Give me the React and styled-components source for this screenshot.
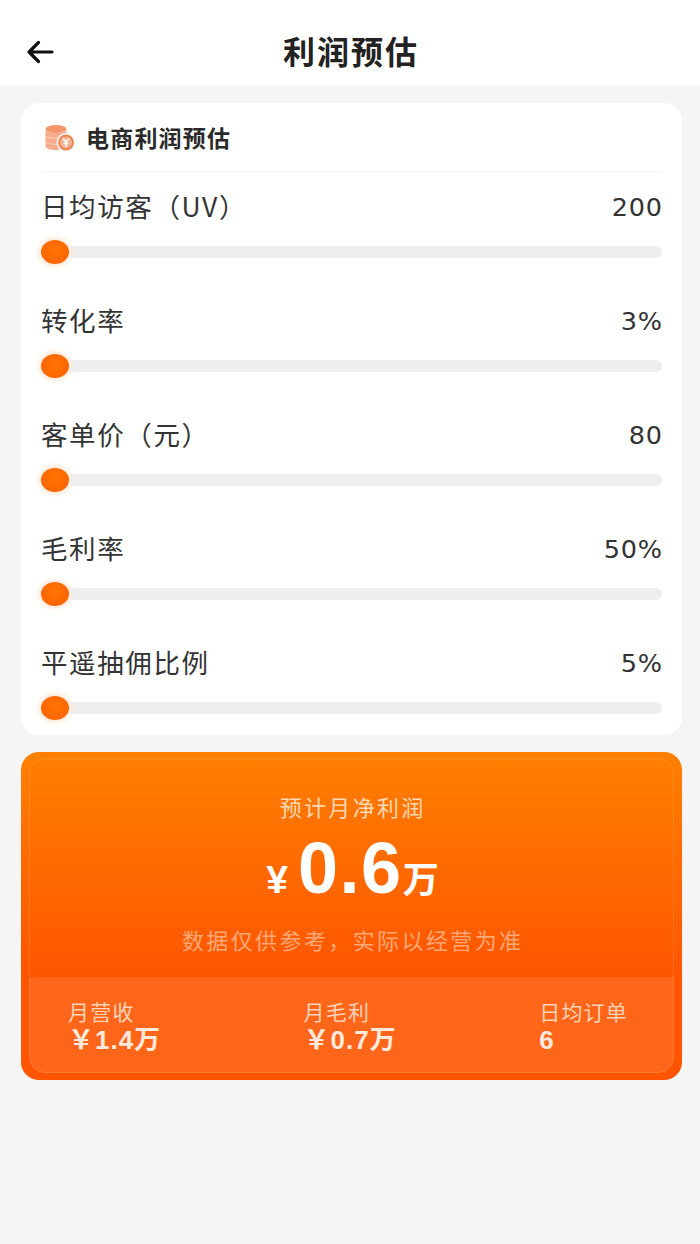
import styled, { createGlobalStyle } from "styled-components";

const cjk = `"Noto Sans CJK SC", "Noto Sans", sans-serif`;
const latin = `"DejaVu Sans", "Noto Sans CJK SC", sans-serif`;

const Global = createGlobalStyle`
  html, body { margin: 0; padding: 0; background: #f5f5f5; }
  * { box-sizing: border-box; }
`;

const Page = styled.div`
  width: 700px;
  height: 1244px;
  background: #f5f5f5;
  font-family: ${cjk};
  overflow: hidden;
`;

const Header = styled.header`
  height: 86px;
  background: #fff;
  display: flex;
  align-items: center;
  justify-content: center;
  position: relative;
  padding-top: 14px;
`;

const Back = styled.svg`
  position: absolute;
  left: 25px;
  top: 37px;
  width: 30px;
  height: 30px;
  fill: none;
  stroke: #111;
  stroke-width: 3.2;
  stroke-linecap: round;
  stroke-linejoin: round;
`;

const Title = styled.h1`
  margin: 0 0 0 2px;
  font-size: 32px;
  line-height: 36px;
  font-weight: 700;
  letter-spacing: 2px;
  color: #222;
`;

const Main = styled.main`
  padding: 17px 18px 0 21px;
  display: flex;
  flex-direction: column;
  gap: 17px;
`;

const Card = styled.section`
  height: 632px;
  background: #fff;
  border-radius: 18px;
  padding: 0 20px 0 21px;
`;

const CardHead = styled.div`
  height: 69px;
  padding: 0 0 0 2px;
  display: flex;
  align-items: center;
  gap: 10px;
  border-bottom: 1px solid #f6f6f6;
`;

const CoinSvg = styled.svg`
  width: 32px;
  height: 28px;
  margin-top: 2px;
`;

const CardTitle = styled.h2`
  margin: 0;
  font-size: 23px;
  line-height: 28px;
  font-weight: 700;
  letter-spacing: 1.2px;
  color: #2a2a2a;
`;

const Rows = styled.div`
  display: flex;
  flex-direction: column;
`;

const Row = styled.div`
  height: 114px;
  padding-top: 17px;
`;

const RowTop = styled.div`
  height: 36px;
  display: flex;
  align-items: center;
  justify-content: space-between;
  color: #333;
`;

const Label = styled.span`
  font-size: 26.5px;
  line-height: 36px;
  letter-spacing: 1.6px;
  margin-left: -1px;
  margin-top: -2px;
`;

const Value = styled.span`
  font-family: ${latin};
  font-size: 25.5px;
  letter-spacing: 0.8px;
  margin-right: -0.8px;
  margin-top: -1px;
`;

const Track = styled.div`
  position: relative;
  height: 12px;
  margin-top: 21px;
  background: #eeeeee;
  border-radius: 6px;
`;

const Thumb = styled.span`
  position: absolute;
  left: -1px;
  top: -6px;
  width: 28px;
  height: 24px;
  border-radius: 50%;
  background: radial-gradient(circle at 50% 40%, #ff7400, #fd5f00);
  box-shadow: 0 0 4px 3px #ffeadb;
`;

const Result = styled.section`
  position: relative;
  height: 328px;
  border-radius: 18px;
  padding: 6px 8px 7px;
  background: linear-gradient(180deg, #ff8000 0%, #ff5500 68%, #ff5500 100%);
  display: flex;
  flex-direction: column;
  color: #fff;
  &::after {
    content: "";
    position: absolute;
    inset: 6px 8px 7px;
    border: 1px solid rgba(255, 255, 255, 0.13);
    border-radius: 16px;
    pointer-events: none;
  }
`;

const ResultTop = styled.div`
  height: 219px;
  display: flex;
  flex-direction: column;
  align-items: center;
`;

const ResultLabel = styled.div`
  margin-top: 34px;
  font-size: 22px;
  line-height: 28px;
  letter-spacing: 2.3px;
  margin-right: -2.3px;
  color: #ffd9b5;
`;

const Amount = styled.div`
  margin: 12px 0 0 2px;
  height: 72px;
  display: flex;
  align-items: baseline;
  font-family: "Liberation Sans", ${cjk};
  font-weight: 700;
  line-height: 72px;
`;

const Yen = styled.span`
  font-size: 39px;
  margin-right: 10px;
`;

const Big = styled.span`
  font-size: 72px;
  letter-spacing: 1.5px;
`;

const Unit = styled.span`
  font-size: 36px;
  font-family: ${cjk};
`;

const Note = styled.div`
  margin-top: 21px;
  font-size: 22px;
  line-height: 28px;
  letter-spacing: 2.4px;
  margin-right: -2.4px;
  color: #ffa877;
`;

const Stats = styled.div`
  flex: 1;
  background: rgba(255, 255, 255, 0.1);
  border-radius: 0 0 16px 16px;
  padding: 21px 46px 0 39px;
  display: flex;
  justify-content: space-between;
`;

const Stat = styled.div``;

const StatLabel = styled.div`
  font-size: 21px;
  line-height: 26px;
  letter-spacing: 1.2px;
  color: #ffd3b8;
`;

const StatValue = styled.div`
  margin-top: 2px;
  font-family: "Liberation Sans", ${cjk};
  font-size: 26px;
  line-height: 28px;
  font-weight: 700;
  letter-spacing: 1px;
  color: #ffeadd;
`;

const fields = [
  { label: "日均访客（UV）", value: "200" },
  { label: "转化率", value: "3%" },
  { label: "客单价（元）", value: "80" },
  { label: "毛利率", value: "50%" },
  { label: "平遥抽佣比例", value: "5%" },
];

const stats = [
  { label: "月营收", value: "￥1.4万" },
  { label: "月毛利", value: "￥0.7万" },
  { label: "日均订单", value: "6" },
];

function CoinIcon() {
  return (
    <CoinSvg viewBox="0 0 32 28">
      <ellipse cx="12" cy="5" rx="10.500" ry="4" fill="#f4946a" />
      <path d="M1.500 6v17c2 4 19 4 21 0V6c-2 4-19 4-21 0z" fill="#f8ab8c" />
      <path d="M1.500 12c4 3 17 3 21 0M1.500 18c4 3 17 3 21 0" fill="none" stroke="#fbd0bc" strokeWidth="1" />
      <circle cx="22" cy="18.500" r="9.500" fill="#fff" />
      <circle cx="22" cy="18.500" r="7" fill="#f6b08f" stroke="#ef8553" strokeWidth="2" />
      <path d="M19 14.500l3 3.500 3-3.500M22 18v5M19.500 19.500h5" fill="none" stroke="#fff" strokeWidth="1.600" />
    </CoinSvg>
  );
}

function App() {
  return (
    <Page>
      <Global />
      <Header>
        <Back viewBox="0 0 30 30">
          <path d="M27 15H4M13.500 5.500L4 15l9.500 9.500" />
        </Back>
        <Title>利润预估</Title>
      </Header>
      <Main>
        <Card>
          <CardHead>
            <CoinIcon />
            <CardTitle>电商利润预估</CardTitle>
          </CardHead>
          <Rows>
            {fields.map((f) => (
              <Row key={f.label}>
                <RowTop>
                  <Label>{f.label}</Label>
                  <Value>{f.value}</Value>
                </RowTop>
                <Track>
                  <Thumb />
                </Track>
              </Row>
            ))}
          </Rows>
        </Card>
        <Result>
          <ResultTop>
            <ResultLabel>预计月净利润</ResultLabel>
            <Amount>
              <Yen>¥</Yen>
              <Big>0.6</Big>
              <Unit>万</Unit>
            </Amount>
            <Note>数据仅供参考，实际以经营为准</Note>
          </ResultTop>
          <Stats>
            {stats.map((s) => (
              <Stat key={s.label}>
                <StatLabel>{s.label}</StatLabel>
                <StatValue>{s.value}</StatValue>
              </Stat>
            ))}
          </Stats>
        </Result>
      </Main>
    </Page>
  );
}

export default App;
